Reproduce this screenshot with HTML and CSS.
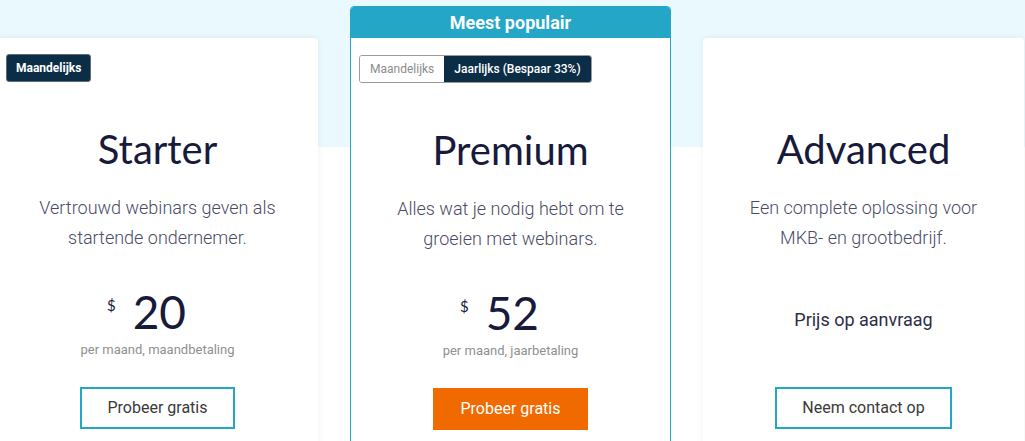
FILE: index.html
```html
<!DOCTYPE html>
<html lang="nl">
<head>
<meta charset="utf-8">
<title>Prijzen</title>
<link rel="stylesheet" href="styles.css">
</head>
<body>
<main class="pricing">
  <div class="plans">
    <article class="plan">
      <div class="plan-body">
        <div class="plan-top"><span class="badge">Maandelijks</span></div>
        <h2 class="plan-name">Starter</h2>
        <p class="plan-desc">Vertrouwd webinars geven als startende ondernemer.</p>
        <div class="plan-pricing">
          <div class="plan-price"><span class="currency">$</span><span class="amount">20</span></div>
          <p class="plan-note">per maand, maandbetaling</p>
        </div>
        <a class="btn btn-outline" href="#">Probeer gratis</a>
      </div>
    </article>

    <article class="plan plan-featured">
      <header class="plan-ribbon">Meest populair</header>
      <div class="plan-body">
        <div class="plan-top">
          <div class="toggle">
            <span class="toggle-opt">Maandelijks</span>
            <span class="toggle-opt is-active">Jaarlijks (Bespaar 33%)</span>
          </div>
        </div>
        <h2 class="plan-name">Premium</h2>
        <p class="plan-desc">Alles wat je nodig hebt om te groeien met webinars.</p>
        <div class="plan-pricing">
          <div class="plan-price"><span class="currency">$</span><span class="amount">52</span></div>
          <p class="plan-note">per maand, jaarbetaling</p>
        </div>
        <a class="btn btn-primary" href="#">Probeer gratis</a>
      </div>
    </article>

    <article class="plan">
      <div class="plan-body">
        <div class="plan-top"></div>
        <h2 class="plan-name">Advanced</h2>
        <p class="plan-desc">Een complete oplossing voor MKB- en grootbedrijf.</p>
        <div class="plan-pricing">
          <p class="plan-quote">Prijs op aanvraag</p>
        </div>
        <a class="btn btn-outline" href="#">Neem contact op</a>
      </div>
    </article>
  </div>
</main>
</body>
</html>
```

FILE: styles.css
```css
html, body {
  margin: 0;
  padding: 0;
  overflow: hidden;
}

body {
  font-family: "Roboto", "Liberation Sans", sans-serif;
  background: linear-gradient(#eaf9fe 0, #eaf9fe 147px, #ffffff 147px);
  min-height: 441px;
}

.pricing {
  padding-top: 6px;
}

.plans {
  display: flex;
  align-items: flex-start;
  gap: 32px;
  margin-left: -3px;
}

.plan {
  box-sizing: border-box;
  width: 321px;
  flex: none;
  margin-top: 32px;
  background: #fff;
  border: 1px solid transparent;
  border-radius: 4px;
  box-shadow: 0 0 6px rgba(20, 40, 60, 0.07);
}

.plan-featured {
  margin-top: 0;
  border-color: #24a6c7;
  box-shadow: none;
}

.plan-ribbon {
  height: 31px;
  background: #24a6c7;
  color: #fff;
  font-weight: 700;
  font-size: 18px;
  line-height: 31px;
  text-align: center;
  border-radius: 3px 3px 0 0;
}

.plan-body {
  padding: 15px 8px 30px;
  display: flex;
  flex-direction: column;
  align-items: center;
  text-align: center;
}

.plan-featured .plan-body {
  padding-top: 17px;
}

.plan-top {
  align-self: stretch;
  height: 28px;
  display: flex;
  justify-content: flex-start;
}

.badge {
  box-sizing: border-box;
  height: 28px;
  padding: 0 9px;
  background: #0b2e46;
  border: 1px solid #5d6b77;
  border-radius: 3px;
  color: #fff;
  font-size: 12px;
  font-weight: 700;
  line-height: 26px;
}

.toggle {
  display: flex;
  height: 28px;
  box-sizing: border-box;
  border: 1px solid #9a9a9a;
  border-radius: 3px;
  overflow: hidden;
}

.toggle-opt {
  padding: 0 10px 0 10px;
  font-size: 12px;
  line-height: 26px;
  color: #8c8c8c;
  background: #fff;
}

.toggle-opt.is-active {
  background: #0b2e46;
  color: #fff;
  font-weight: 500;
  padding: 0 10px 0 10px;
}

.plan-name {
  margin: 43px 0 0;
  font-family: "Lato", "Open Sans", sans-serif;
  font-weight: 400;
  font-size: 40px;
  line-height: 48px;
  color: #181a3b;
}

.plan-desc {
  margin: 20px 0 0;
  max-width: 262px;
  font-weight: 300;
  font-size: 18px;
  line-height: 30px;
  color: #4a4b66;
}

.plan-pricing {
  margin-top: 36px;
  height: 69px;
  display: flex;
  flex-direction: column;
  align-items: center;
}

.plan-price {
  display: flex;
  align-items: flex-start;
  gap: 17px;
  height: 45px;
  padding-right: 22px;
  color: #181a3b;
}

.currency {
  font-family: "Lato", "Open Sans", sans-serif;
  font-size: 15px;
  line-height: 15px;
  margin-top: 9px;
}

.amount {
  font-family: "Lato", "Open Sans", sans-serif;
  font-size: 46px;
  line-height: 45px;
}

.plan-note {
  margin: 8px 0 0;
  font-size: 13px;
  line-height: 16px;
  color: #909090;
}

.plan-quote {
  margin: 20px 0 0;
  font-size: 18px;
  line-height: 21px;
  color: #2c2e44;
}

.btn {
  display: inline-block;
  box-sizing: border-box;
  margin-top: 29px;
  height: 42px;
  padding: 0 25px;
  border: 2px solid #24a6c7;
  font-size: 16px;
  line-height: 38px;
  color: #3a3a3a;
  text-decoration: none;
  background: #fff;
}

.btn-primary {
  background: #f06a00;
  border-color: #f06a00;
  color: #fff;
}
```
